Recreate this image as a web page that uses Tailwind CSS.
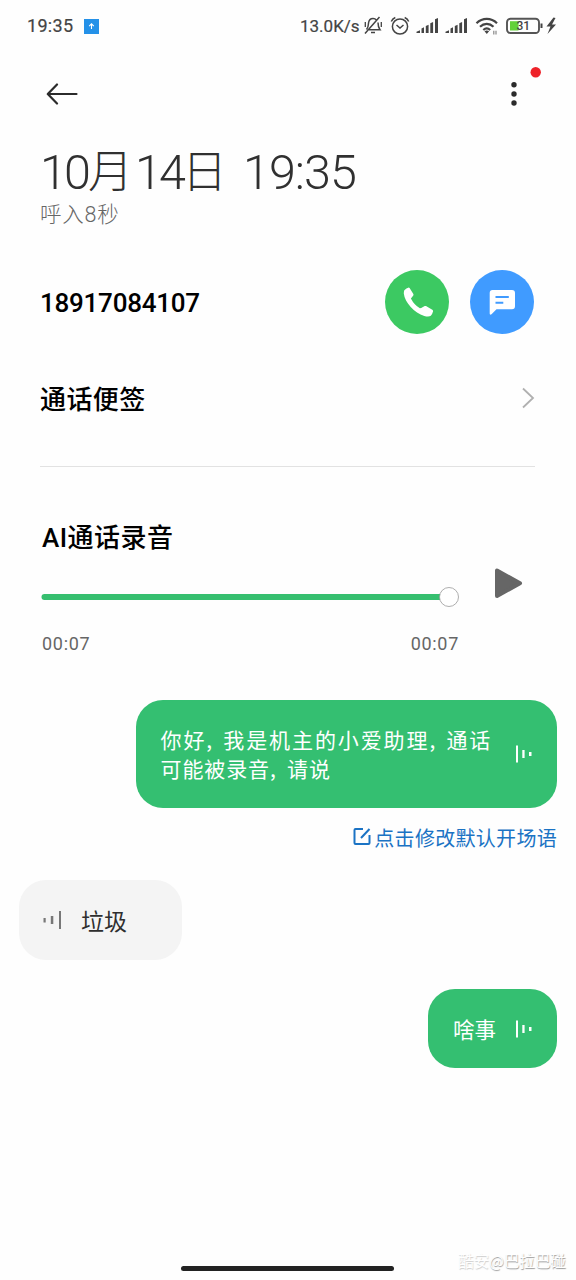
<!DOCTYPE html>
<html lang="zh-CN">
<head>
<meta charset="utf-8">
<title>通话录音</title>
<script src="https://cdn.jsdelivr.net/npm/@tailwindcss/browser@4"></script>
</head>
<body class="bg-white">
<main class="relative flex h-[1280px] w-[576px] flex-col overflow-hidden bg-[#fefefe] font-['Roboto','Noto_Sans_CJK_SC',sans-serif] text-black">
  <!-- Status bar -->
  <header class="flex h-[52px] shrink-0 items-center pl-[27px] text-[#444]">
    <span class="w-[57px] text-[18px] leading-none tracking-[0.300px] whitespace-nowrap [-webkit-text-stroke:0.2px_#444]">19:35</span>
    <svg class="h-[15px] w-[15px]" viewBox="0 0 15 15"><path fill="#2491e8" d="M0 0h15v15H0z"/><path d="M7.5 10V5M5.2 7.1 7.5 4.8l2.3 2.3" fill="none" stroke="#fff" stroke-width="1.1"/></svg>
    <span class="ml-[201px] w-[62px] text-[17px] leading-none whitespace-nowrap tracking-[0px] [-webkit-text-stroke:0.2px_#444]">13.0K/s</span>
    <svg class="h-[36px] w-[214px]" viewBox="362 8 214 36" fill="none" stroke="#444" stroke-width="1.5">
      <!-- muted bell -->
      <path d="M366.500 29.500c2-2 1.800-4 2-6.500.4-3 2.200-4.500 4.500-4.500 1.500 0 2.600.5 3.400 1.600M378 22.500c0 3.500.3 5 2 7.200h-11M365 33.500 379.500 17M371 32.500h4"/>
      <path d="M365.300 22v5M381.300 22v5" stroke-width="1.300"/>
      <!-- alarm -->
      <circle cx="400" cy="26.500" r="7.600"/><path d="m396.500 25 3.500 3 3.500-3M391.300 21.500c.7-1.800 2-3.200 4-4M408.700 21.500c-.7-1.800-2-3.200-4-4"/>
      <!-- signal bars -->
      <g fill="#444" stroke="none">
        <path id="bars" d="M416.500 33v-1.300l3.500-1.500V33zM421.500 33v-4.500l2.500-1.200V33zM425.800 33v-7l2.800-1.300V33zM430.300 33v-9.700l2.800-1.200V33zM435 33V19.300l3-1.300v15z"/>
        <use href="#bars" x="29"/>
      </g>
      <!-- wifi -->
      <g stroke-width="2.200"><path d="M476.500 23.200c6-5.800 14.500-5.800 20.500 0M480 26.800c4-3.800 9.500-3.800 13.500 0M483.300 30c2.100-1.900 4.800-1.900 6.900 0"/></g>
      <path d="m484.500 31.300 2.300 2.700 2.300-2.700q-2.300-1.500-4.600 0z" fill="#444" stroke="none"/>
      <path d="M493.800 34.500v-3.700M496 30.800v3.700" stroke="#888" stroke-width="1.200"/>
      <!-- battery -->
      <rect x="507" y="18.700" width="32" height="14.300" rx="3.500" stroke="#555" stroke-width="1.900"/>
      <path d="M510 21.200h8.500v9.300H510z" fill="#62d13a" stroke="none"/>
      <path d="M541.500 23.500v4.500" stroke-width="2"/>
      <text x="516.500" y="30.300" font-family="Roboto" font-size="12" font-weight="500" fill="#444" stroke="none">31</text>
      <path d="M553.500 17.500l-7 9h4l-3 7.500 8.500-9.500h-4l3.500-6.500z" fill="#444" stroke="none"/>
    </svg>
  </header>

  <!-- Navigation -->
  <nav class="flex h-[84px] shrink-0 items-center justify-between pr-[40px] pl-[46px]">
    <svg class="h-[22px] w-[32px]" viewBox="0 0 32 22" fill="none" stroke="#2b2b2b" stroke-width="2.200" stroke-linecap="round" stroke-linejoin="round"><path d="M30.500 11H2M11 1.500 1.800 11l9.200 9.500"/></svg>
    <svg class="mb-[16px] h-[44px] w-[32px]" viewBox="504 64 32 44" overflow="visible"><g fill="#2b2b2b"><circle cx="514" cy="84.800" r="2.700"/><circle cx="514" cy="94" r="2.700"/><circle cx="514" cy="103" r="2.700"/></g><circle cx="535.700" cy="72.200" r="5.200" fill="#ee2229"/></svg>
  </nav>

  <!-- Call time -->
  <section class="shrink-0 pl-[40px]">
    <h1 class="flex h-[66px] items-center pt-[8px] text-[48.500px] font-light leading-[66px] whitespace-nowrap text-[#303030]">
      <span class="w-[48px] tracking-[-3px]">10</span><span class="w-[47px] text-[45px]">月</span><span class="w-[47px] tracking-[-3px]">14</span><span class="w-[61px] text-[45px]">日</span><span class="tracking-[-1px]">19:35</span>
    </h1>
    <p class="mt-[2px] h-[22px] text-[21.500px] font-light leading-[22px] tracking-[0.800px] whitespace-nowrap text-[#666]">呼入8秒</p>
  </section>

  <!-- Number and actions -->
  <section class="mt-[44px] flex h-[64px] shrink-0 items-center pl-[40px]">
    <span class="w-[345px] pt-[2px] text-[26px] font-medium leading-none tracking-[-0.250px]">18917084107</span>
    <button class="size-[64px] rounded-full bg-[#3cc962]"><svg class="size-[64px]" viewBox="0 0 64 64"><path fill="#fff" d="M19.300 20.300q2-2 4.500-2.700l.8.500 3.900 6.200-.2 1.100-2.400 3.100q3.300 6.500 9 9.800l1.300-.2 3.500-2.200 1.300.1 6.700 4.100.4 1.100q-.6 2.500-2.300 4.500c-1.300 1.100-4 .9-6.500.2C29.500 43 19.800 32.500 18.800 23.500q0-2 .5-3.200z"/></svg></button>
    <button class="ml-[21px] size-[64px] rounded-full bg-[#409bff]"><svg class="size-[64px]" viewBox="0 0 64 64"><path fill="#fff" d="M22.500 20H42q3 0 3 3v13.300q0 3-3 3H26.500l-5 5q-1.800 1-1.800-.8V23q0-3 2.800-3z"/><path d="M25.500 27h13.300M25.500 32.700h7.800" stroke="#409bff" stroke-width="2.100"/></svg></button>
  </section>

  <!-- Notes -->
  <section class="mr-[41px] ml-[40px] flex h-[133px] shrink-0 items-center justify-between border-b border-[#e2e2e2] pb-[4px]">
    <span class="pt-[3px] text-[26px] font-medium leading-none tracking-[0.400px]">通话便签</span>
    <svg class="h-[22px] w-[14px]" viewBox="0 0 14 22" fill="none" stroke="#b0b0b0" stroke-width="1.800"><path d="m2 1.500 10 9.500L2 20.500"/></svg>
  </section>

  <!-- Recording player -->
  <section class="flex h-[233px] shrink-0 flex-col pt-[55px] pl-[41px]">
    <h2 class="h-[32px] pl-[1px] text-[26px] font-medium leading-[32px] tracking-[0.500px] whitespace-nowrap">AI通话录音</h2>
    <div class="mt-[13px] flex h-[34px] items-start">
      <svg class="h-[42px] w-[420px] shrink-0" viewBox="0 0 420 42"><path d="M3.500 30H400" stroke="#36bf6f" stroke-width="6" stroke-linecap="round"/><circle cx="408" cy="30" r="9.500" fill="#fff" stroke="#999" stroke-width=".8"/></svg>
      <svg class="ml-[33px] h-[34px] w-[30px]" viewBox="0 0 30 34"><path d="M3 3.500v25.500L26 16.300z" fill="#666" stroke="#666" stroke-width="4" stroke-linejoin="round"/></svg>
    </div>
    <div class="mt-[31px] flex w-[418px] justify-between pl-[1px] text-[18px] leading-[24px] text-[#666] tracking-[0.700px]"><span>00:07</span><span>00:07</span></div>
  </section>

  <!-- Transcript -->
  <section class="flex shrink-0 flex-col pr-[19px] pl-[19px] font-['Noto_Sans_CJK_SC',sans-serif]">
    <div class="flex h-[108px] w-[421.500px] items-center self-end rounded-[27px] bg-[#34bf71] pl-[25px] text-white">
      <p class="w-[354px] text-[21px] leading-[29px] whitespace-nowrap"><span class="tracking-[1.900px]">你好<span class="inline-block w-[17px]">,</span>我是机主的小爱助理<span class="inline-block w-[17px]">,</span>通话</span><br><span class="tracking-[0.900px]">可能被录音<span class="inline-block w-[17px]">,</span>请说</span></p>
      <svg class="h-[18px] w-[18px]" viewBox="0 0 18 18" fill="#fff"><path id="wave" d="M1 .500h2v17H1zM7.300 5h2.300v8H7.300zM14 7h2.500v4H14z"/></svg>
    </div>
    <a class="mt-[15px] flex h-[30px] items-center self-end text-[20px] leading-[30px] tracking-[0.300px] whitespace-nowrap text-[#1b73c4]">
      <svg class="mr-[3px] mb-[2px] h-[18px] w-[18px]" viewBox="0 0 18 18" fill="none" stroke="#1b73c4" stroke-width="2"><path d="M10 1H2.500q-1 0-1 1v13q0 1 1 1h13q1 0 1-1V7M8 10 16.500 1"/></svg>点击修改默认开场语
    </a>
    <div class="mt-[27px] flex h-[80px] w-[163px] items-center rounded-[27px] bg-[#f4f4f4] pl-[24px] text-[#2e2e2e]">
      <svg class="mr-[20px] h-[18px] w-[18px]" viewBox="0 0 18 18" fill="#777"><path d="M16 0h2v18h-2zM7.800 5h2.500v8H7.800zM.5 7h2.200v4.500H.5z"/></svg>
      <span class="text-[23px] leading-none">垃圾</span>
    </div>
    <div class="mt-[29px] flex h-[79px] w-[129px] items-center self-end rounded-[27px] bg-[#34bf71] pl-[25px] text-white">
      <span class="w-[62px] text-[21.500px] leading-none">啥事</span>
      <svg class="h-[18px] w-[18px]" viewBox="0 0 18 18"><use href="#wave" fill="#fff"/></svg>
    </div>
  </section>

  <!-- Gesture bar and watermark -->
  <footer class="relative mt-auto flex h-[38px] shrink-0 items-start justify-end pr-[10px]">
    <div class="absolute top-[24px] left-[181px] h-[5px] w-[213px] rounded-full bg-[#222]"></div>
    <span class="mt-[6px] font-['Noto_Sans_CJK_SC'] text-[15.500px] leading-[24px] whitespace-nowrap text-white"><span class="[text-shadow:0.5px_0.5px_1px_#ccc]">酷安</span><span class="[text-shadow:0.5px_1px_1px_#999]">@巴拉巴碰</span></span>
  </footer>
</main>
</body>
</html>
